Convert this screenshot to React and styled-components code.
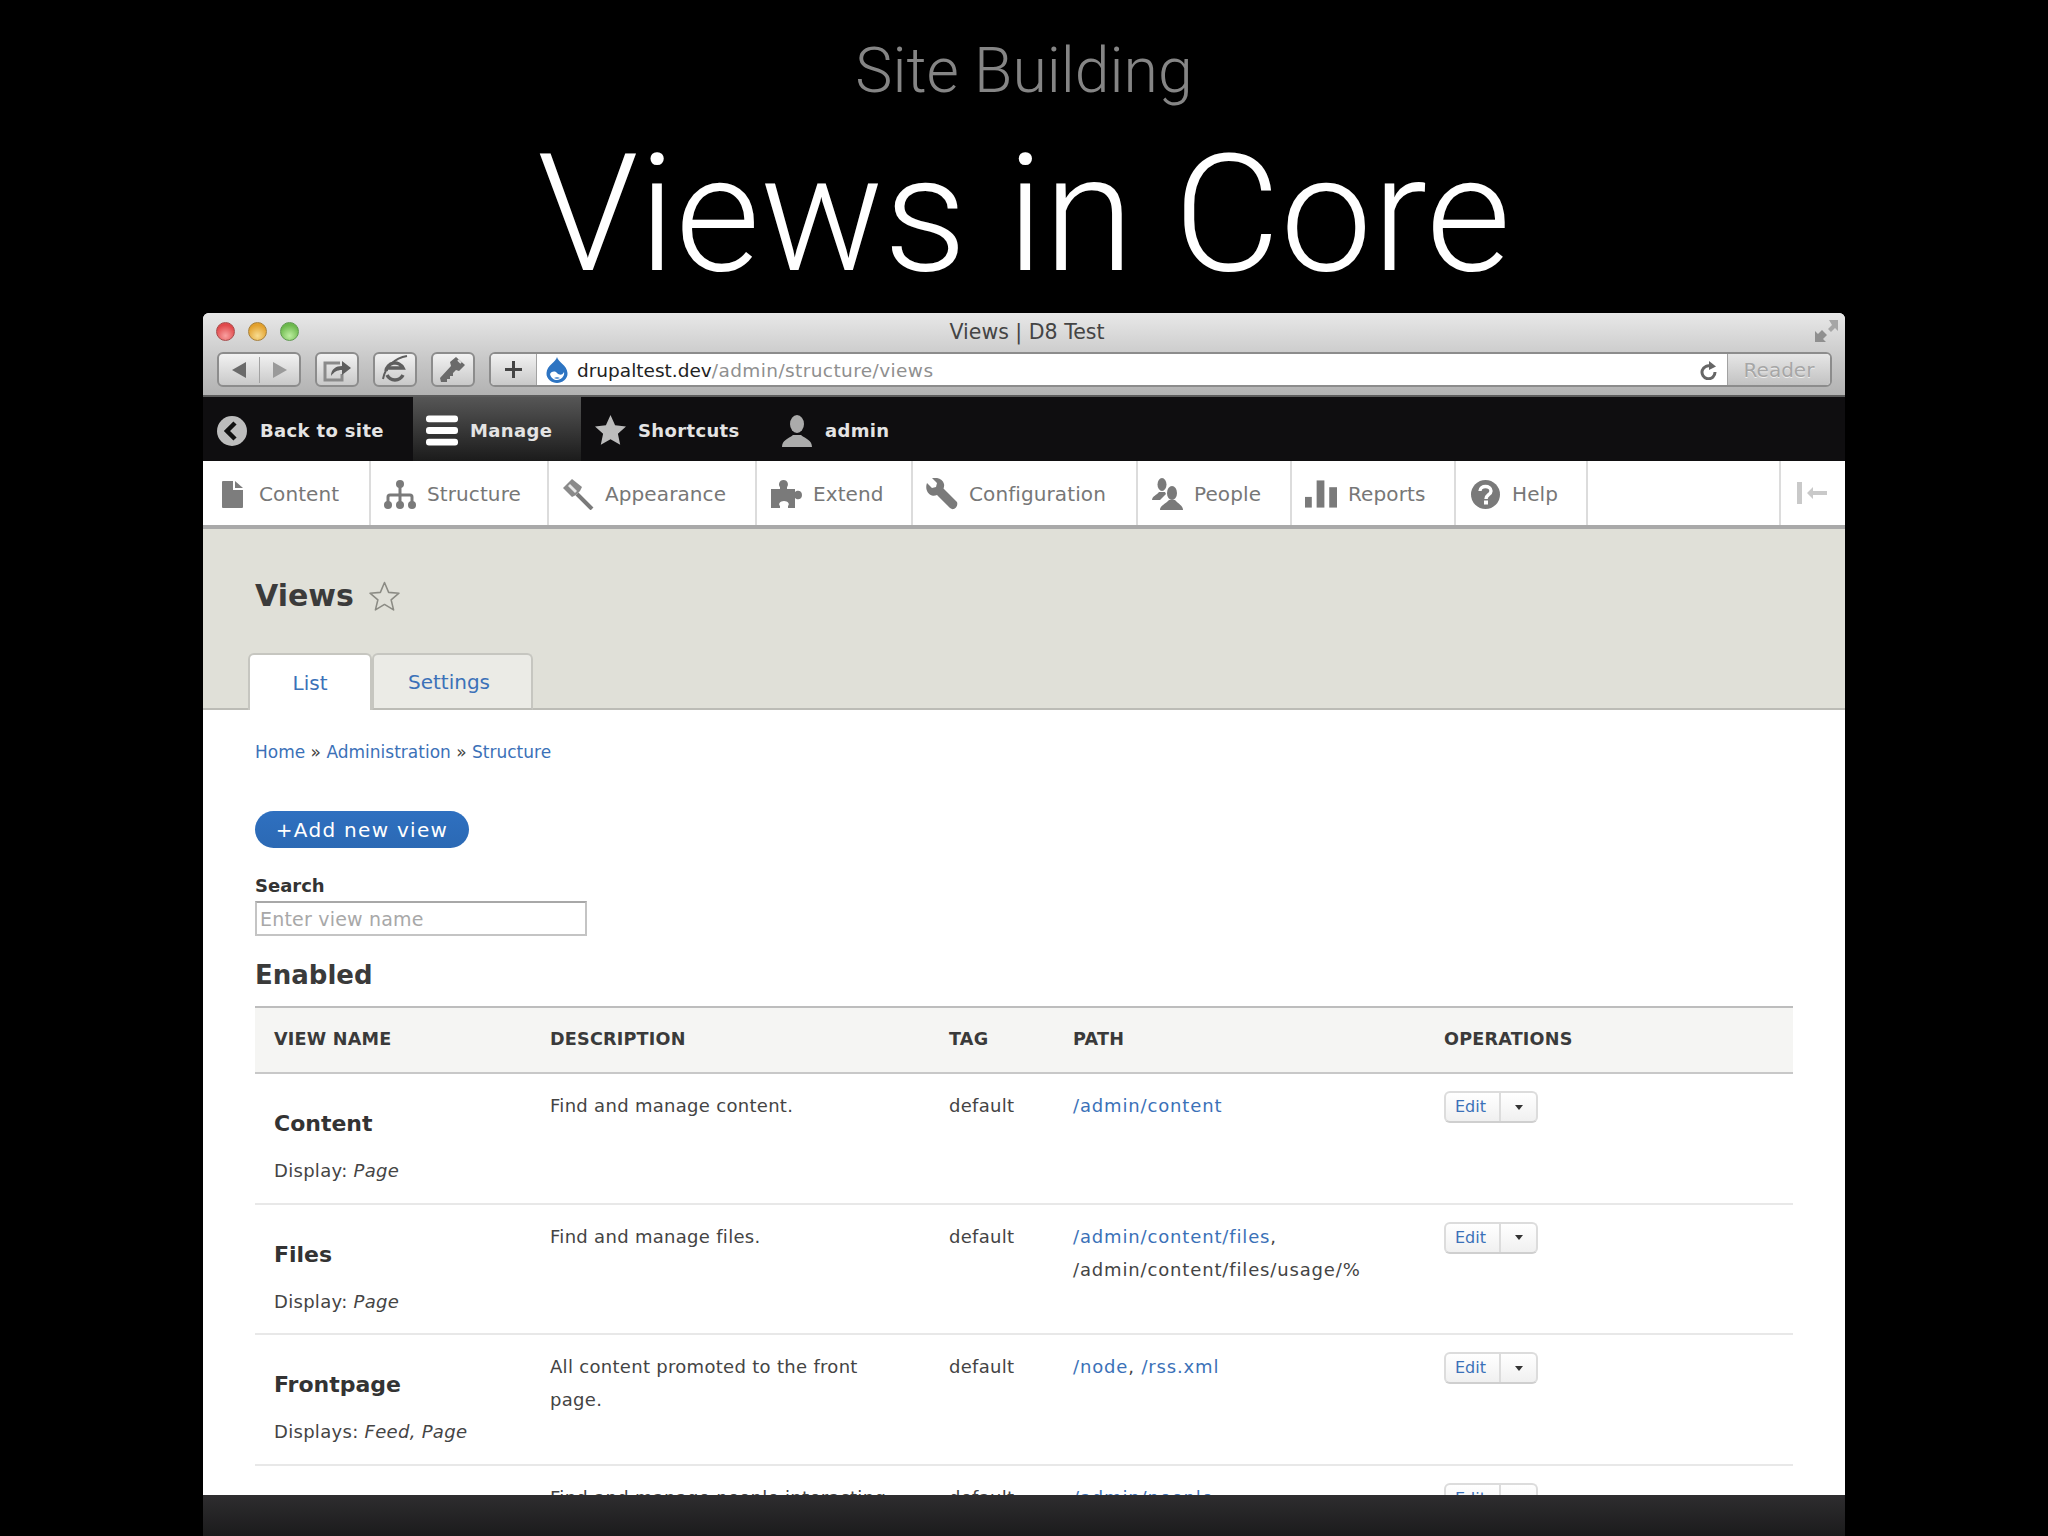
import React from 'react'
import styled, { createGlobalStyle } from 'styled-components'

const GlobalStyle = createGlobalStyle`
	html, body {
		margin: 0;
		padding: 0;
		background: #000;
	}
	* {
		box-sizing: border-box;
	}
`

const Page = styled.div`
	width: 2048px;
	height: 1536px;
	background: #000;
	overflow: hidden;
	display: flex;
	flex-direction: column;
	align-items: center;
	font-family: "DejaVu Sans", sans-serif;
`

const Slide = styled.header`
	height: 313px;
	display: flex;
	flex-direction: column;
	align-items: center;
	font-family: Roboto, "Liberation Sans", sans-serif;
	font-weight: 300;
`

const Kicker = styled.div`
	margin-top: 35px;
	font-size: 62.5px;
	line-height: 72px;
	color: #858585;
`

const Headline = styled.h1`
	margin: 8px 0 0;
	font-size: 164px;
	line-height: 198px;
	font-weight: 300;
	color: #fff;
`

const Browser = styled.div`
	width: 1642px;
	height: 1182px;
	flex: none;
	background: #fff;
	border-radius: 6px 6px 0 0;
	overflow: hidden;
`

const Band = styled.div`
	width: 1642px;
	height: 41px;
	flex: none;
	background: linear-gradient(#2e2d2f, #1b1b1c);
`

const Chrome = styled.div`
	height: 84px;
	background: linear-gradient(#e8e8e8, #c6c6c6 60%, #b2b2b2);
	border-bottom: 2px solid #5c5c5c;
`

const TitleRow = styled.div`
	height: 37px;
	margin-bottom: 2px;
	padding: 0 7px 0 13px;
	display: flex;
	align-items: center;
`

const Lights = styled.div`
	flex: 1;
	display: flex;
	gap: 13px;
`

const TitleEnd = styled.div`
	flex: 1;
	display: flex;
	justify-content: flex-end;
`

const Light = styled.span`
	width: 19px;
	height: 19px;
	border-radius: 50%;
	border: 1px solid ${p => p.$edge};
	background: radial-gradient(circle at 50% 75%, ${p => p.$glow}, ${p => p.$color} 70%);
`

const WindowTitle = styled.div`
	font-size: 20.5px;
	color: #444;
`

const ToolRow = styled.div`
	display: flex;
	gap: 14px;
	padding: 0 13px 0 14px;
	height: 35px;
`

const Tool = styled.div`
	width: ${p => p.$w}px;
	flex: none;
	display: flex;
	align-items: center;
	justify-content: center;
	border: 2px solid #8c8c8c;
	border-radius: 6px;
	background: linear-gradient(#f2f2f2, #c9c9c9);
`

const ToolSplit = styled.span`
	width: 1px;
	height: 26px;
	margin: 0 13px;
	background: #a2a2a2;
`

const AddressBar = styled.div`
	flex: 1;
	display: flex;
	border: 2px solid #8c8c8c;
	border-radius: 6px;
	overflow: hidden;
	background: #fff;
`

const AddTab = styled.div`
	width: 46px;
	flex: none;
	display: flex;
	align-items: center;
	justify-content: center;
	background: linear-gradient(#f2f2f2, #c9c9c9);
	border-right: 1px solid #a2a2a2;
`

const Url = styled.div`
	flex: 1;
	display: flex;
	align-items: center;
	gap: 9px;
	padding: 1px 10px 0 9px;
	font-size: 18.5px;
	color: #222;
`

const UrlRest = styled.span`
	color: #8f8f8f;
	letter-spacing: 0.4px;
`

const UrlText = styled.div`
	flex: 1;
	white-space: nowrap;
`

const Reader = styled.div`
	width: 103px;
	flex: none;
	display: flex;
	align-items: center;
	justify-content: center;
	font-size: 20px;
	color: #a6a6a6;
	text-shadow: 0 1px 0 #eee;
	border-left: 1px solid #a2a2a2;
	background: linear-gradient(#e6e6e6, #c2c2c2);
`

const AdminBar = styled.nav`
	height: 64px;
	background: #0f0e10;
	display: flex;
`

const AdminItem = styled.div`
	width: ${p => p.$w}px;
	flex: none;
	display: flex;
	align-items: center;
	gap: 12px;
	padding: 3px 0 0 13px;
	font-size: 18px;
	font-weight: 700;
	letter-spacing: 0.35px;
	color: #e4e4e4;
	background: ${p => (p.$active ? 'linear-gradient(#565656, #1b1b1b)' : 'none')};
`

const IconBox = styled.span`
	width: 32px;
	height: 32px;
	flex: none;
	display: flex;
	align-items: center;
	justify-content: center;
`

const Menu = styled.nav`
	height: 68px;
	display: flex;
	background: #fff;
	border-bottom: 4px solid #a9a9a9;
`

const MenuItem = styled.div`
	width: ${p => p.$w}px;
	flex: none;
	display: flex;
	align-items: center;
	gap: 11px;
	padding: 2px 0 0 13px;
	font-size: 20px;
	letter-spacing: 0.1px;
	color: #777;
	border-right: 2px solid #dcdcdc;
`

const MenuSpacer = styled.div`
	flex: 1;
`

const Collapse = styled.div`
	width: 66px;
	flex: none;
	display: flex;
	align-items: center;
	padding-left: 16px;
	border-left: 2px solid #dcdcdc;
`

const PageHead = styled.div`
	height: 181px;
	background: #e0e0d8;
	border-bottom: 2px solid #bcbcb6;
	display: flex;
	flex-direction: column;
	justify-content: space-between;
`

const TitleLine = styled.div`
	display: flex;
	align-items: center;
	gap: 15px;
	padding: 49px 0 0 52px;
`

const PageTitle = styled.h2`
	margin: 0;
	font-size: 30px;
	line-height: 36px;
	font-weight: 700;
	color: #3b3b3b;
`

const Tabs = styled.div`
	display: flex;
	padding-left: 45px;
	margin-bottom: -2px;
`

const Tab = styled.div`
	width: ${p => p.$w}px;
	height: 57px;
	padding-right: ${p => (p.$active ? 0 : 7)}px;
	display: flex;
	align-items: center;
	justify-content: center;
	font-size: 20px;
	color: #3b71b8;
	background: ${p => (p.$active ? '#fff' : '#ebebe6')};
	border: 2px solid #c6c6c0;
	border-bottom: ${p => (p.$active ? 'none' : '2px solid #bcbcb6')};
	border-radius: 6px 6px 0 0;
`

const Body = styled.div`
	padding: 30px 52px 0;
`

const Crumbs = styled.div`
	font-size: 17px;
	line-height: 24px;
	color: #444;
`

const Link = styled.span`
	color: #3b71b8;
`

const AddButton = styled.div`
	margin-top: 47px;
	width: 214px;
	height: 37px;
	display: flex;
	align-items: center;
	justify-content: center;
	border-radius: 19px;
	background: linear-gradient(#2f70c0, #2b69b4);
	color: #fff;
	font-size: 20px;
	letter-spacing: 1.3px;
`

const FieldLabel = styled.label`
	display: block;
	margin-top: 26px;
	font-size: 18px;
	line-height: 24px;
	font-weight: 700;
	color: #333;
`

const SearchBox = styled.div`
	width: 332px;
	height: 35px;
	margin-top: 3px;
	padding-left: 3px;
	display: flex;
	align-items: center;
	border: 2px solid #c4c4c4;
	border-top-color: #a8a8a8;
	font-size: 19px;
	letter-spacing: 0.2px;
	color: #a8a8a8;
`

const SectionTitle = styled.h3`
	margin: 22px 0 14px;
	font-size: 26px;
	line-height: 34px;
	font-weight: 700;
	color: #3a3a3a;
`

const Table = styled.table`
	width: 100%;
	table-layout: fixed;
	border-collapse: collapse;
`

const HeadCell = styled.th`
	width: ${p => p.$w}px;
	height: 66px;
	padding: 0 0 2px 19px;
	text-align: left;
	font-size: 17.6px;
	font-weight: 700;
	letter-spacing: 0.2px;
	color: #3a3a3a;
	background: #f5f5f3;
	border-top: 2px solid #bdbdbd;
	border-bottom: 2px solid #c8c8c8;
`

const Row = styled.tr`
	height: 130.5px;
	border-bottom: 2px solid #e8e8e8;
`

const Cell = styled.td`
	vertical-align: top;
	padding: 15px 30px 0 19px;
	font-size: 18px;
	line-height: 33px;
	letter-spacing: 0.3px;
	color: #444;
`

const PathCell = styled(Cell)`
	padding-right: 0;
	letter-spacing: 0.85px;
`

const ViewName = styled.div`
	margin: 18px 0 14px;
	font-size: 22px;
	font-weight: 700;
	letter-spacing: 0;
	color: #333;
`

const Edit = styled.div`
	width: 94px;
	height: 32px;
	margin-top: 2px;
	display: flex;
	border: 2px solid #dcdcdc;
	border-bottom-color: #cfcfcf;
	border-radius: 6px;
	font-size: 16px;
	line-height: 28px;
	letter-spacing: 0;
	color: #3b71b8;
	background: linear-gradient(#fff, #f0f0f0);
`

const EditLabel = styled.span`
	width: 55px;
	padding-left: 9px;
	border-right: 2px solid #dcdcdc;
`

const Caret = styled.span`
	flex: 1;
	display: flex;
	align-items: center;
	justify-content: center;
	&::after {
		content: '';
		border: 4px solid transparent;
		border-top: 5px solid #333;
		border-bottom: 0;
	}
`

const BackIcon = () => (
	<svg width='30' height='30' viewBox='0 0 30 30'>
		<circle cx='15' cy='15' r='15' fill='#bdbdbd' />
		<path d='M18 7l-8 8 8 8' fill='none' stroke='#111' strokeWidth='4.5' />
	</svg>
)

const BurgerIcon = () => (
	<svg width='33' height='31' viewBox='0 0 33 31'>
		<rect x='0' y='0' width='33' height='7' rx='3' fill='#fff' />
		<rect x='0' y='12' width='33' height='7' rx='3' fill='#fff' />
		<rect x='0' y='24' width='33' height='7' rx='3' fill='#fff' />
	</svg>
)

const StarIcon = () => (
	<svg width='31' height='31' viewBox='0 0 31 31'>
		<path d='M15.5 0l4.6 10.2 10.9 1.2-8.1 7.3 2.3 11.1-9.7-5.6-9.7 5.6 2.3-11.1L0 11.4l10.9-1.2z' fill='#bcbcbc' />
	</svg>
)

const UserIcon = () => (
	<svg width='30' height='32' viewBox='0 0 30 32'>
		<ellipse cx='15' cy='9' rx='7' ry='9' fill='#ababab' />
		<path d='M0 32c0-7 6-8 11-12h8c5 4 11 5 11 12z' fill='#ababab' />
	</svg>
)

const PageIcon = () => (
	<svg width='21' height='27' viewBox='0 0 21 27'>
		<path d='M0 1q0-1 1-1h10v9h10v17q0 1-1 1H1q-1 0-1-1z' fill='#7d7d7d' />
		<path d='M13 0l8 7h-8z' fill='#7d7d7d' />
	</svg>
)

const TreeIcon = () => (
	<svg width='32' height='29' viewBox='0 0 32 29'>
		<g fill='#7a7a7a'>
			<circle cx='16' cy='4' r='4' />
			<circle cx='4' cy='25' r='4' />
			<circle cx='16' cy='25' r='4' />
			<circle cx='28' cy='25' r='4' />
		</g>
		<path d='M16 6v19M4 25v-8q0-2 2-2h20q2 0 2 2v8' fill='none' stroke='#7a7a7a' strokeWidth='3' />
	</svg>
)

const BrushIcon = () => (
	<svg width='31' height='31' viewBox='0 0 31 31'>
		<path d='M9 0L0 9l9 9 4-2 4-4 2-4z' fill='#8a8a8a' />
		<path d='M7 5l-2 2 7 7 2-2z' fill='#e8e8e8' />
		<path d='M14 15l15 15' stroke='#7a7a7a' strokeWidth='4' />
	</svg>
)

const PuzzleIcon = () => (
	<svg width='32' height='28' viewBox='0 0 32 28'>
		<path
			d='M1 9h9V7C8 5 9 0 13.5 0S19 5 17 7v2h8v3c2-2 7-2 7 3s-5 5-7 3v10h-7v-2c2-2 0-5-4-5s-6 3-4 5v2H1z'
			fill='#7a7a7a'
		/>
	</svg>
)

const WrenchIcon = () => (
	<svg width='32' height='32' viewBox='0 0 32 32'>
		<path
			d='M1 5l5 5 4-1 1-4-5-5c5-1 11 1 12 6 .4 2 0 3-.5 4.5L31 24q1 3-1 5.5-3 3-6 .5L11 17c-1.5.5-3 1-5 .5C1 16-1 10 1 5z'
			fill='#7a7a7a'
		/>
	</svg>
)

const PeopleIcon = () => (
	<svg width='32' height='32' viewBox='0 0 32 32'>
		<g fill='#7a7a7a'>
			<ellipse cx='11' cy='6.5' rx='4.5' ry='6.5' />
			<path d='M1 22c0-4 5-5 7-8h6l1 2-6 6z' />
			<ellipse cx='21' cy='15' rx='5' ry='7' />
			<path d='M9 32c0-5 6-6 9-10h6c3 4 8 5 8 10z' />
		</g>
	</svg>
)

const BarsIcon = () => (
	<svg width='33' height='28' viewBox='0 0 33 28'>
		<g fill='#7a7a7a'>
			<rect x='0' y='17' width='7' height='11' />
			<rect x='12' y='0' width='8' height='28' />
			<rect x='25' y='7' width='8' height='21' />
		</g>
	</svg>
)

const HelpIcon = () => (
	<svg width='29' height='29' viewBox='0 0 29 29'>
		<circle cx='14.5' cy='14.5' r='14.5' fill='#7a7a7a' />
		<path d='M9 11c0-6 11-6 11 0 0 4-5 3.5-5 8' fill='none' stroke='#fff' strokeWidth='3.4' />
		<rect x='13' y='20.5' width='4' height='4' fill='#fff' />
	</svg>
)

const CollapseIcon = () => (
	<svg width='32' height='22' viewBox='0 0 32 22'>
		<rect x='0' y='0' width='5' height='22' fill='#c9c9c9' />
		<path d='M16 5l-6 6 6 6v-4h14V9H16z' fill='#c9c9c9' />
	</svg>
)

const OutlineStar = () => (
	<svg width='31' height='31' viewBox='0 0 30 30'>
		<path
			d='M15 1.5l4 9.5 10 .8-7.6 6.4 2.4 9.8L15 22.7l-8.8 5.3 2.4-9.8L1 11.8l10-.8z'
			fill='none'
			stroke='#8b8b84'
			strokeWidth='1.5'
			strokeLinejoin='round'
		/>
	</svg>
)

const ShareIcon = () => (
	<svg width='28' height='24' viewBox='0 0 28 24'>
		<path d='M17 5H2v17h17v-6' fill='none' stroke='#8a8a8a' strokeWidth='3' />
		<path d='M8 18c0-7 5-10 11-10V3l9 7-9 7v-5c-5 0-8 2-11 6z' fill='#5e5e5e' />
	</svg>
)

const ReadIcon = () => (
	<svg width='26' height='30' viewBox='0 0 26 30'>
		<path d='M4 16a9 9 0 0 1 17-3H5M21 20a9 9 0 0 1-16 0' fill='none' stroke='#5e5e5e' strokeWidth='3.5' />
		<path d='M1 24C3 12 13 3 25 1' fill='none' stroke='#5e5e5e' strokeWidth='2' />
	</svg>
)

const KeyIcon = () => (
	<svg width='26' height='28' viewBox='0 0 26 28'>
		<path d='M16 1l9 8-6 6-3-1-3 3v3h-3v3H7v3H1l-1-4 11-12-1-4z' fill='#6a6a6a' />
		<path d='M18 4l3 3' stroke='#ddd' strokeWidth='2' />
	</svg>
)

const PlusIcon = () => (
	<svg width='17' height='17' viewBox='0 0 17 17'>
		<path d='M8.5 0v17M0 8.5h17' stroke='#444' strokeWidth='3' />
	</svg>
)

const DropIcon = () => (
	<svg width='22' height='26' viewBox='0 0 22 26'>
		<path d='M11 0c1 5 10 8 10.5 16C22 22 16 26 11 26S0 22 .5 16C1 8 10 5 11 0z' fill='#2d74c2' />
		<path d='M4 17c2-3 5-3 7-1s5 3 7-1c1 4-3 8-7 8-3 0-6-2-7-6z' fill='#fff' />
		<path d='M8 21c2-1 4-1 6 0-2 1-4 1-6 0z' fill='#2d74c2' />
	</svg>
)

const ReloadIcon = () => (
	<svg width='17' height='19' viewBox='0 0 17 19'>
		<path d='M11.5 5.5A6.5 6.5 0 1 0 15 11' fill='none' stroke='#666' strokeWidth='3' />
		<path d='M9 0l7 5.5L9 9z' fill='#666' />
	</svg>
)

const ResizeIcon = () => (
	<svg width='23' height='23' viewBox='0 0 23 23'>
		<path d='M0 11l3 3 4-4 5 5-4 4 3 3H0z' fill='#8f8f8f' />
		<path d='M23 0v11l-3-3-4 4-3-3 4-4-3-5z' fill='#a6a6a6' />
	</svg>
)

const rows = [
	{
		name: 'Content',
		label: 'Display:',
		kinds: 'Page',
		desc: 'Find and manage content.',
		path: <Link>/admin/content</Link>,
	},
	{
		name: 'Files',
		label: 'Display:',
		kinds: 'Page',
		desc: 'Find and manage files.',
		path: (
			<>
				<Link>/admin/content/files</Link>,<br />
				/admin/content/files/usage/%
			</>
		),
	},
	{
		name: 'Frontpage',
		label: 'Displays:',
		kinds: 'Feed, Page',
		desc: 'All content promoted to the front page.',
		path: (
			<>
				<Link>/node</Link>, <Link>/rss.xml</Link>
			</>
		),
	},
	{
		name: 'People',
		label: 'Display:',
		kinds: 'Page',
		desc: 'Find and manage people interacting with your site.',
		path: <Link>/admin/people</Link>,
	},
]

const adminItems = [
	{ w: 210, text: 'Back to site', icon: <BackIcon /> },
	{ w: 168, text: 'Manage', icon: <BurgerIcon />, active: true },
	{ w: 187, text: 'Shortcuts', icon: <StarIcon /> },
	{ w: 180, text: 'admin', icon: <UserIcon /> },
]

const menuItems = [
	{ w: 168, text: 'Content', icon: <PageIcon /> },
	{ w: 178, text: 'Structure', icon: <TreeIcon /> },
	{ w: 208, text: 'Appearance', icon: <BrushIcon /> },
	{ w: 156, text: 'Extend', icon: <PuzzleIcon /> },
	{ w: 225, text: 'Configuration', icon: <WrenchIcon /> },
	{ w: 154, text: 'People', icon: <PeopleIcon /> },
	{ w: 164, text: 'Reports', icon: <BarsIcon /> },
	{ w: 132, text: 'Help', icon: <HelpIcon /> },
]

const App = () => (
	<Page>
		<GlobalStyle />
		<Slide>
			<Kicker>Site Building</Kicker>
			<Headline>Views in Core</Headline>
		</Slide>
		<Browser>
			<Chrome>
				<TitleRow>
					<Lights>
						<Light $color='#e0484a' $glow='#f9a0a0' $edge='#a84a4a' />
						<Light $color='#e2a02c' $glow='#f8dc90' $edge='#a8803a' />
						<Light $color='#6cb84c' $glow='#bdeea0' $edge='#5f9a4f' />
					</Lights>
					<WindowTitle>Views | D8 Test</WindowTitle>
					<TitleEnd>
						<ResizeIcon />
					</TitleEnd>
				</TitleRow>
				<ToolRow>
					<Tool $w={84}>
						<svg width='14' height='16' viewBox='0 0 14 16'>
							<path d='M14 0v16L0 8z' fill='#6a6a6a' />
						</svg>
						<ToolSplit />
						<svg width='14' height='16' viewBox='0 0 14 16'>
							<path d='M0 0v16l14-8z' fill='#9a9a9a' />
						</svg>
					</Tool>
					<Tool $w={44}>
						<ShareIcon />
					</Tool>
					<Tool $w={44}>
						<ReadIcon />
					</Tool>
					<Tool $w={44}>
						<KeyIcon />
					</Tool>
					<AddressBar>
						<AddTab>
							<PlusIcon />
						</AddTab>
						<Url>
							<DropIcon />
							<UrlText>
								drupaltest.dev<UrlRest>/admin/structure/views</UrlRest>
							</UrlText>
							<ReloadIcon />
						</Url>
						<Reader>Reader</Reader>
					</AddressBar>
				</ToolRow>
			</Chrome>
			<AdminBar>
				{adminItems.map(item => (
					<AdminItem key={item.text} $w={item.w} $active={item.active}>
						<IconBox>{item.icon}</IconBox>
						{item.text}
					</AdminItem>
				))}
			</AdminBar>
			<Menu>
				{menuItems.map(item => (
					<MenuItem key={item.text} $w={item.w}>
						<IconBox>{item.icon}</IconBox>
						{item.text}
					</MenuItem>
				))}
				<MenuSpacer />
				<Collapse>
					<CollapseIcon />
				</Collapse>
			</Menu>
			<PageHead>
				<TitleLine>
					<PageTitle>Views</PageTitle>
					<OutlineStar />
				</TitleLine>
				<Tabs>
					<Tab $w={124} $active>
						List
					</Tab>
					<Tab $w={161}>Settings</Tab>
				</Tabs>
			</PageHead>
			<Body>
				<Crumbs>
					<Link>Home</Link> » <Link>Administration</Link> » <Link>Structure</Link>
				</Crumbs>
				<AddButton>+Add new view</AddButton>
				<FieldLabel>Search</FieldLabel>
				<SearchBox>Enter view name</SearchBox>
				<SectionTitle>Enabled</SectionTitle>
				<Table>
					<thead>
						<tr>
							<HeadCell $w={276}>VIEW NAME</HeadCell>
							<HeadCell $w={399}>DESCRIPTION</HeadCell>
							<HeadCell $w={124}>TAG</HeadCell>
							<HeadCell $w={371}>PATH</HeadCell>
							<HeadCell>OPERATIONS</HeadCell>
						</tr>
					</thead>
					<tbody>
						{rows.map(row => (
							<Row key={row.name}>
								<Cell>
									<ViewName>{row.name}</ViewName>
									{row.label} <em>{row.kinds}</em>
								</Cell>
								<Cell>{row.desc}</Cell>
								<Cell>default</Cell>
								<PathCell>{row.path}</PathCell>
								<Cell>
									<Edit>
										<EditLabel>Edit</EditLabel>
										<Caret />
									</Edit>
								</Cell>
							</Row>
						))}
					</tbody>
				</Table>
			</Body>
		</Browser>
		<Band />
	</Page>
)

export default App
